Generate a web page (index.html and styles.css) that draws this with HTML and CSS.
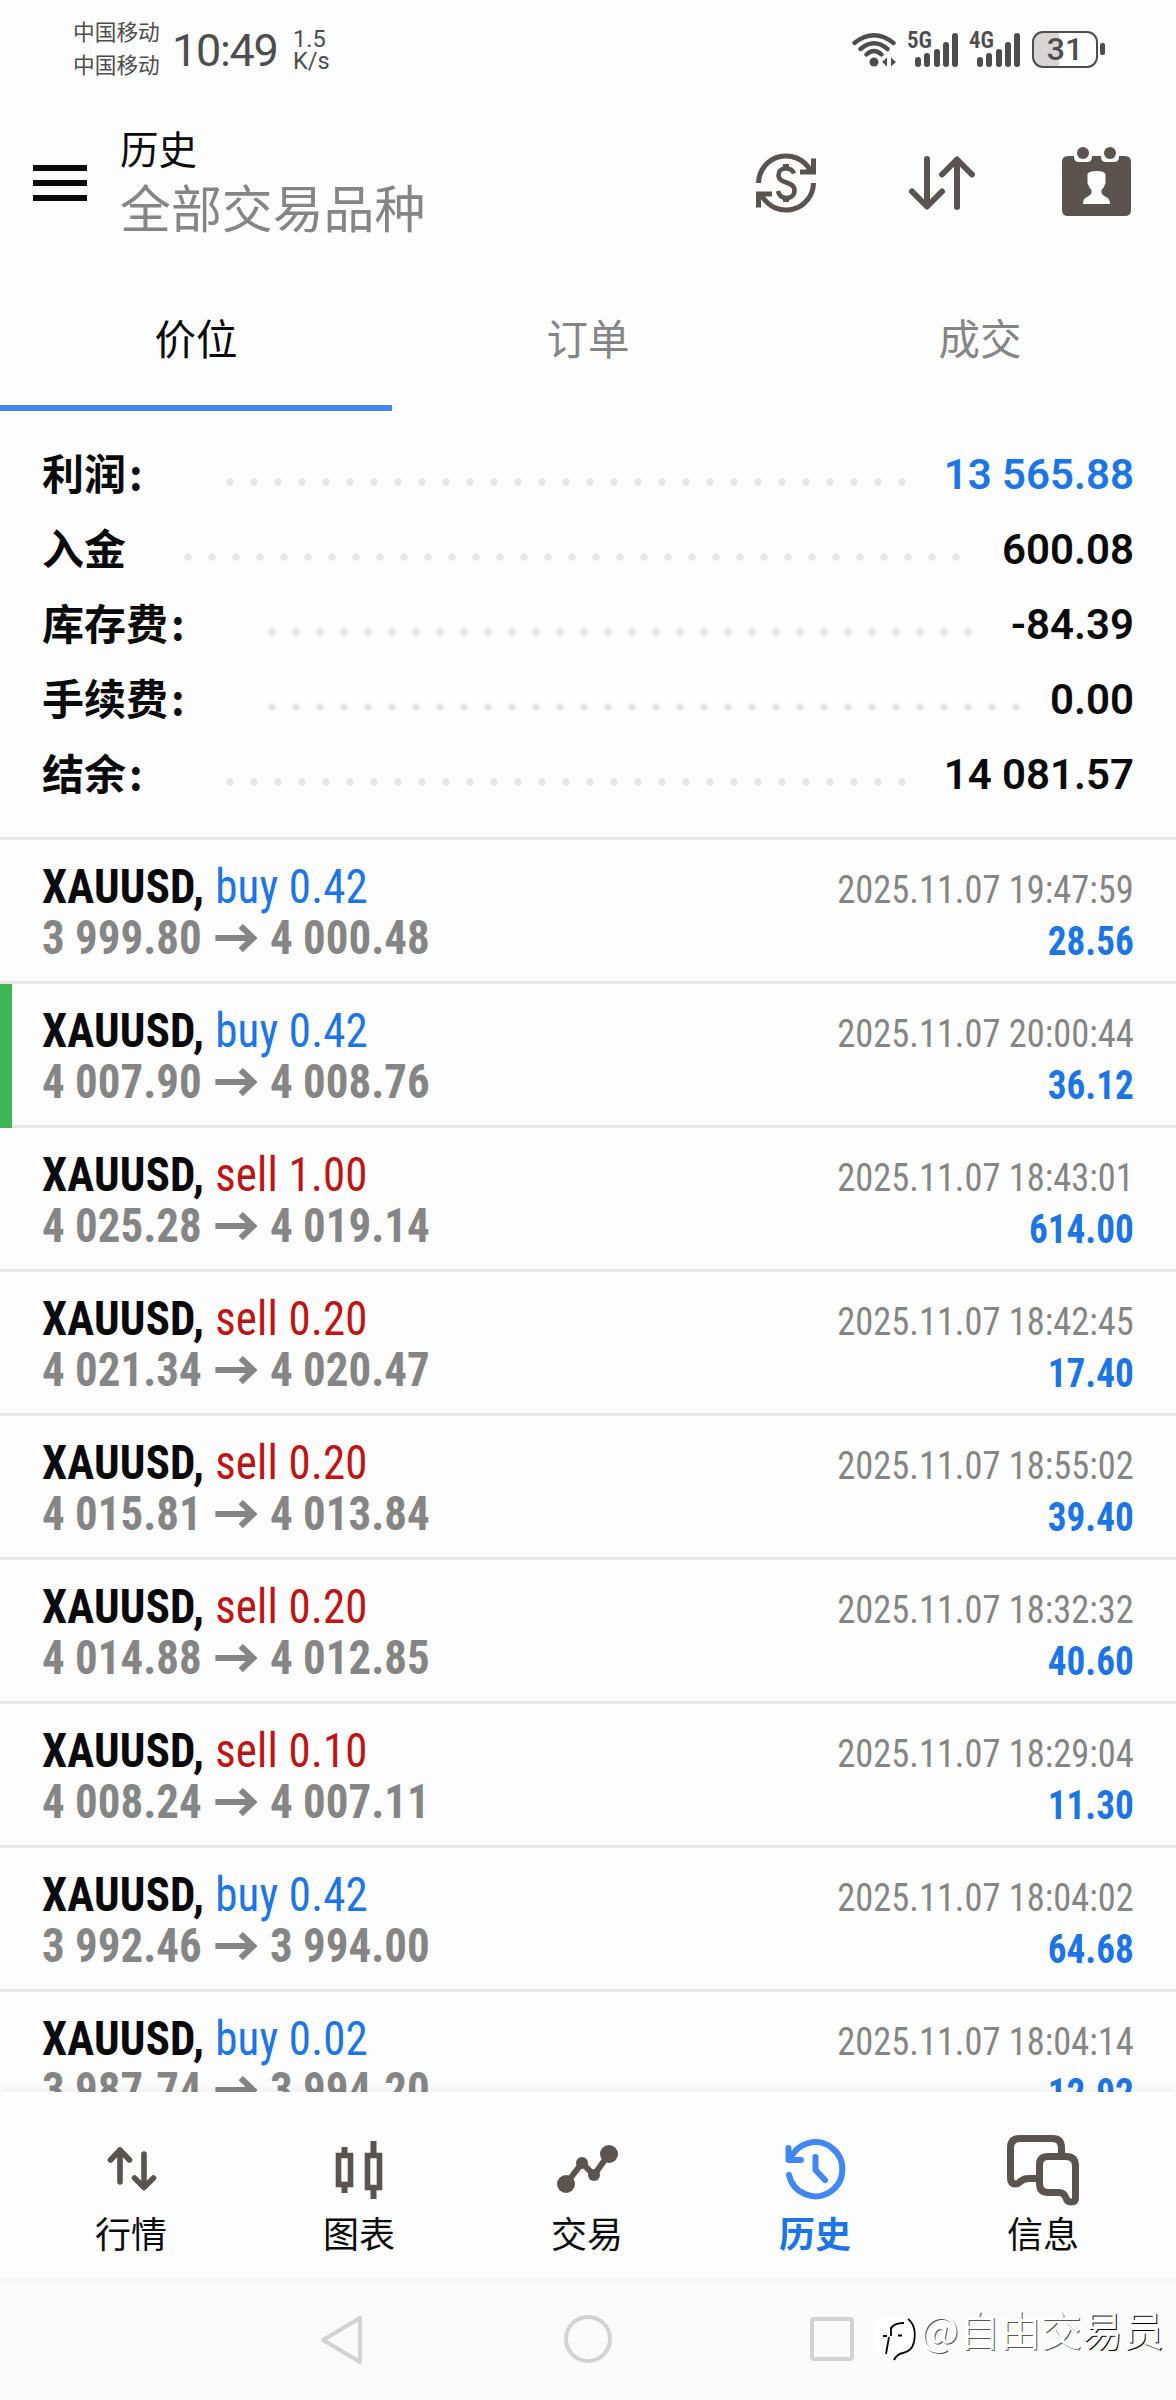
FILE: index.html
```html
<!DOCTYPE html>
<html lang="zh-CN">
<head>
<meta charset="utf-8">
<title>历史</title>
<link rel="stylesheet" href="styles.css">
</head>
<body>
<div class="status">
  <div class="carriers"><span>中国移动</span><span>中国移动</span></div>
  <div class="clock">10:49</div>
  <div class="speed"><span>1.5</span><span>K/s</span></div>
  <svg class="wifi" width="46" height="38" viewBox="850 31 46 38">
    <g fill="none" stroke="#4d4d4d" stroke-width="4.4" stroke-linecap="round">
      <path d="M854.500 43Q874 27.500 893.500 43M860.500 49Q874 37.500 887.500 49M866.500 54.500Q874 47.500 881.500 54.500"/>
    </g>
    <circle cx="874" cy="62" r="4.500" fill="#4d4d4d"/>
    <path d="M882 62l5-4.500v9zM891 57.500l5 4.500-5 4.500z" fill="#4d4d4d"/>
  </svg>
  <div class="signal"><b>5G</b><i></i><i></i><i></i><i></i><i></i></div>
  <div class="signal"><b>4G</b><i></i><i></i><i></i><i></i><i></i></div>
  <div class="battery">31</div>
  <div class="battery-tip"></div>
</div>

<header class="header">
  <div class="menu"><i></i><i></i><i></i></div>
  <div class="titles"><h1>历史</h1><p>全部交易品种</p></div>
  <svg class="currency" width="60" height="60" viewBox="0 0 60 60">
    <g fill="none" stroke="#5b534f" stroke-width="5">
      <path d="M2.500 30A27.500 27.500 0 0 1 54 17M57.500 30A27.500 27.500 0 0 1 6 43"/>
      <path d="M57.500 5.500V19H44M2.500 54.500V41H16"/>
      <path d="M38 20.500C36.500 16.500 33.500 15.500 30 15.500C25.500 15.500 22.500 18 22.500 22C22.500 31.500 38.500 27.500 38.500 37.500C38.500 42 35 45 30.500 45C26 45 23 42.500 22 38" stroke-width="4.600"/>
    </g>
    <path d="M27 11h6v5h-6zM27 44h6v5h-6zM51 13l6 6h-6zM9 47l-6-6h6z" fill="#5b534f"/>
  </svg>
  <svg class="sort" width="66" height="54" viewBox="0 0 66 54">
    <path d="M18 3V50M3 35.500L18 50.500L33 35.500M48 51V4M33 18.500L48 3.500L63 18.500" fill="none" stroke="#5b534f" stroke-width="6" stroke-linecap="round" stroke-linejoin="round"/>
  </svg>
  <svg class="calendar" width="69" height="69" viewBox="0 0 69 69">
    <path d="M6 9H12V10Q12 15 17 15H25Q30 15 30 10V9H39V10Q39 15 44 15H52Q57 15 57 10V9H63Q69 9 69 15V63Q69 69 63 69H6Q0 69 0 63V15Q0 9 6 9Z" fill="#5b534f"/>
    <circle cx="21" cy="6" r="6" fill="#5b534f"/><circle cx="48" cy="6" r="6" fill="#5b534f"/>
    <path d="M25.500 27Q27 24 34.500 24Q42 24 43.500 27V36Q42.500 40 39.500 43V46Q40 48 44 50Q48 51.500 48 57H21Q21 51.500 25 50Q29 48 29.500 46V43Q26.500 40 25.500 36Z" fill="#fdfdfd"/>
  </svg>
</header>

<nav class="tabs"><span class="active">价位</span><span>订单</span><span>成交</span></nav>

<section class="summary">
  <div><b class="w2">利润<u>:</u></b><i class="d28"></i><strong class="blue">13 565.88</strong></div>
  <div><b class="w1">入金</b><i class="d32"></i><strong>600.08</strong></div>
  <div><b class="w3">库存费<u>:</u></b><i class="d29"></i><strong>-84.39</strong></div>
  <div><b class="w3">手续费<u>:</u></b><i class="d31"></i><strong>0.00</strong></div>
  <div><b class="w2">结余<u>:</u></b><i class="d28"></i><strong>14 081.57</strong></div>
</section>

<svg width="0" height="0" class="defs"><symbol id="arrow" viewBox="0 0 42 28" preserveAspectRatio="none"><path d="M0 14H38M25.500 2L38 14L25.500 26" fill="none" stroke="#858585" stroke-width="6"/></symbol></svg>

<main class="deals">
  <article><div class="left"><p><b>XAUUSD,</b><span class="buy">buy 0.42</span></p><p class="price">3 999.80<svg><use href="#arrow"/></svg>4 000.48</p></div><div class="right"><time>2025.11.07 19:47:59</time><strong>28.56</strong></div></article>
  <article class="marked"><div class="left"><p><b>XAUUSD,</b><span class="buy">buy 0.42</span></p><p class="price">4 007.90<svg><use href="#arrow"/></svg>4 008.76</p></div><div class="right"><time>2025.11.07 20:00:44</time><strong>36.12</strong></div></article>
  <article><div class="left"><p><b>XAUUSD,</b><span class="sell">sell 1.00</span></p><p class="price">4 025.28<svg><use href="#arrow"/></svg>4 019.14</p></div><div class="right"><time>2025.11.07 18:43:01</time><strong>614.00</strong></div></article>
  <article><div class="left"><p><b>XAUUSD,</b><span class="sell">sell 0.20</span></p><p class="price">4 021.34<svg><use href="#arrow"/></svg>4 020.47</p></div><div class="right"><time>2025.11.07 18:42:45</time><strong>17.40</strong></div></article>
  <article><div class="left"><p><b>XAUUSD,</b><span class="sell">sell 0.20</span></p><p class="price">4 015.81<svg><use href="#arrow"/></svg>4 013.84</p></div><div class="right"><time>2025.11.07 18:55:02</time><strong>39.40</strong></div></article>
  <article><div class="left"><p><b>XAUUSD,</b><span class="sell">sell 0.20</span></p><p class="price">4 014.88<svg><use href="#arrow"/></svg>4 012.85</p></div><div class="right"><time>2025.11.07 18:32:32</time><strong>40.60</strong></div></article>
  <article><div class="left"><p><b>XAUUSD,</b><span class="sell">sell 0.10</span></p><p class="price">4 008.24<svg><use href="#arrow"/></svg>4 007.11</p></div><div class="right"><time>2025.11.07 18:29:04</time><strong>11.30</strong></div></article>
  <article><div class="left"><p><b>XAUUSD,</b><span class="buy">buy 0.42</span></p><p class="price">3 992.46<svg><use href="#arrow"/></svg>3 994.00</p></div><div class="right"><time>2025.11.07 18:04:02</time><strong>64.68</strong></div></article>
  <article><div class="left"><p><b>XAUUSD,</b><span class="buy">buy 0.02</span></p><p class="price">3 987.74<svg><use href="#arrow"/></svg>3 994.20</p></div><div class="right"><time>2025.11.07 18:04:14</time><strong>12.92</strong></div></article>
</main>

<nav class="bottom">
  <div><svg viewBox="0 0 72 72"><path d="M25 47V16M15.500 25L25 15L34.500 25M49 19V50M39.500 43L49 52.500L58.500 43" fill="none" stroke="#5b534f" stroke-width="5.600" stroke-linecap="round" stroke-linejoin="round"/></svg><span>行情</span></div>
  <div><svg viewBox="0 0 72 72"><path d="M21.500 12V18M21.500 52V58M50.500 6V18M50.500 54V64" stroke="#5b534f" stroke-width="6"/><path d="M15.500 20.500H27.500V49.500H15.500ZM44.500 20.500H56.500V52.500H44.500Z" fill="none" stroke="#5b534f" stroke-width="5.600"/></svg><span>图表</span></div>
  <div><svg viewBox="0 0 72 72"><path d="M15 49L31 28L43 40L58 19" fill="none" stroke="#5b534f" stroke-width="6"/><g fill="#5b534f"><circle cx="15" cy="49" r="9"/><circle cx="31" cy="28" r="6"/><circle cx="43" cy="40" r="6"/><circle cx="58" cy="19" r="9"/></g></svg><span>交易</span></div>
  <div class="on"><svg viewBox="0 0 72 72"><path d="M10 40A27 27 0 1 0 11 25M9.500 13V25H22M36.500 22V35L46 45" fill="none" stroke="#4286f4" stroke-width="6" stroke-linecap="round" stroke-linejoin="round"/></svg><span>历史</span></div>
  <div><svg viewBox="0 0 72 72"><path d="M54.500 21V13Q54.500 3.500 45.500 3.500H13Q3.500 3.500 3.500 13V43Q3.500 49 8.500 49Q10.500 49 14 46Q17 43.500 22 43.500H32M41 21.500H59Q68.500 21.500 68.500 31V63Q68.500 67 64 67Q60 67 59 63Q57 57.500 52 57.500H41.500Q32.500 57.500 32.500 48.500V30Q32.500 21.500 41 21.500Z" fill="none" stroke="#5b534f" stroke-width="7"/></svg><span>信息</span></div>
</nav>

<footer class="system">
  <svg width="44" height="50" viewBox="0 0 44 50"><path d="M40 3V47L3 25Z" fill="none" stroke="#d2d2d2" stroke-width="4.200" stroke-linejoin="round"/></svg>
  <i class="home"></i>
  <i class="recent"></i>
  <div class="watermark">
    <svg width="44" height="50" viewBox="0 0 44 50">
      <rect x="0" y="1" width="40" height="39" rx="13" fill="#fff"/>
      <path d="M9 21H13M17 21V12M12 39L15 22M17 14Q19 8 30 8M24 20.500H28M34 4Q43 11 40 27Q38 36 29 38Q23 39 20 45" fill="none" stroke="#000" stroke-width="1.800"/>
    </svg>
    <span>@自由交<b>易员</b></span>
  </div>
</footer>
</body>
</html>
```
FILE: styles.css
```css
* { box-sizing: border-box; margin: 0; padding: 0; }
body {
  width: 1176px; height: 2400px; overflow: hidden;
  display: flex; flex-direction: column;
  background: #fdfdfd; color: #0a0a0a;
  font-family: Roboto, "Noto Sans CJK SC", sans-serif;
}
i { display: block; }
svg { display: block; flex: none; }
.defs { height: 0; }

.status { height: 100px; display: flex; align-items: flex-start; padding-left: 73px; color: #4d4d4d; flex: none; }
.carriers { width: 99px; padding-top: 14px; font: 21.700px/33px "Noto Sans CJK SC", sans-serif; display: flex; flex-direction: column; }
.clock { width: 119px; padding-top: 21px; font-size: 45px; line-height: 60px; letter-spacing: -1.300px; }
.speed { width: 558px; padding-top: 29px; font-size: 23.500px; line-height: 21.500px; display: flex; flex-direction: column; padding-left: 2px; }
.wifi { margin-top: 31px; margin-left: 1px; }
.signal { display: flex; width: 50px; height: 34px; margin: 33px 0 0 12px; align-items: flex-end; gap: 3.300px; padding-left: 7px; position: relative; }
.signal i { width: 6px; border-radius: 3px; background: #4d4d4d; height: 10px; }
.signal i:nth-of-type(2) { height: 14px; }
.signal i:nth-of-type(3) { height: 18px; }
.signal i:nth-of-type(4) { height: 25px; }
.signal i:nth-of-type(5) { height: 34px; }
.signal b { position: absolute; left: -1px; top: -3px; font: 600 23px/22px "Roboto Condensed", sans-serif; }
.battery { width: 66px; height: 37px; margin: 31px 2px 0 12px; border: 2.500px solid #4d4d4d; border-radius: 11px; background: linear-gradient(90deg, #d5d5d5 25px, transparent 25px); font-size: 32px; line-height: 33px; font-weight: 500; text-align: center; }
.battery-tip { width: 5px; height: 12px; border-radius: 2px; background: #4d4d4d; margin-top: 43px; }

.header { height: 160px; flex: none; display: flex; align-items: flex-start; padding: 0 45px 0 33px; }
.menu { width: 54px; margin-top: 65px; display: flex; flex-direction: column; gap: 9px; }
.menu i { height: 6px; background: #0a0a0a; }
.titles { margin-left: 33px; width: 636px; padding-top: 22px; font-family: "Noto Sans CJK SC", sans-serif; }
.titles h1 { font-size: 38.500px; line-height: 50px; font-weight: 400; }
.titles p { font-size: 50.900px; line-height: 69px; color: #858585; }
.currency { margin-top: 53px; }
.sort { margin: 56px 0 0 93px; }
.calendar { margin: 47px 0 0 87px; }

.tabs { height: 151px; flex: none; display: grid; grid-template-columns: repeat(3, 392px); text-align: center; font: 41.500px/154px "Noto Sans CJK SC", sans-serif; color: #858585; }
.tabs span { height: 151px; border-bottom: 6px solid transparent; }
.tabs .active { color: #0a0a0a; border-color: #4286f4; }

.summary { height: 426px; flex: none; padding: 26px 42px 0 42px; }
.summary div { height: 75px; display: flex; align-items: center; }
.summary b { font: 700 42px/69px "Noto Sans CJK SC", sans-serif; height: 75px; }
.summary u { text-decoration: none; margin-left: 3px; }
.summary i { height: 8px; margin-top: 14px; background: radial-gradient(circle at 4px 4px, #e6e6e6 3.300px, transparent 4.200px) 0 0 / 24px 8px repeat-x; }
.w1 { width: 142px; }
.w2 { width: 184px; }
.w3 { width: 226px; }
.d28 { width: 680px; }
.d29 { width: 704px; }
.d31 { width: 752px; }
.d32 { width: 776px; }
.summary strong { margin-left: auto; font-weight: 600; font-size: 42px; line-height: 75px; }
.summary .blue { color: #1b75e6; }

.deals { height: 1255px; overflow: hidden; flex: none; font: 48px/51px "Roboto Condensed", sans-serif; }
.deals article { height: 144px; border-top: 3px solid #e5e5e5; display: flex; justify-content: space-between; padding: 0 42px; position: relative; }
.marked::before { content: ""; position: absolute; left: 0; top: 0; width: 12px; height: 144px; background: #3fb556; z-index: 1; }
.left { padding-top: 21px; transform: scaleX(.936); transform-origin: left; }
.left p { display: flex; align-items: center; height: 51px; white-space: pre; }
.left b { width: 185px; letter-spacing: .2px; }
.left span { letter-spacing: .2px; }
.buy, .right strong { color: #1b75e6; }
.sell { color: #c01414; }
.left .price { color: #858585; font-weight: 700; }
.price svg { width: 45px; height: 28px; margin: 0 14px; }
.right { padding-top: 25px; font-size: 39.200px; text-align: right; display: flex; flex-direction: column; transform: scaleX(.93); transform-origin: right; }
.right time { color: #858585; }
.right strong { font-size: 40px; }

.bottom { height: 186px; flex: none; position: relative; display: grid; grid-template-columns: repeat(5, 228px); padding: 43px 0 0 17px; background: #fdfdfd; box-shadow: 0 -2px 10px rgba(0,0,0,.07); }
.bottom div { display: flex; flex-direction: column; align-items: center; font: 36px/52px "Noto Sans CJK SC", sans-serif; }
.bottom svg { width: 72px; height: 72px; }
.bottom span { margin-top: -1px; }
.bottom .on { color: #1b75e6; font-weight: 700; }

.system { flex: 1; background: #fafafa; display: flex; align-items: flex-start; padding: 37px 0 0 320px; }
.system > svg { margin-right: 200px; }
.home { width: 48px; height: 48px; border: 4px solid #d2d2d2; border-radius: 50%; }
.recent { width: 44px; height: 44px; border: 4px solid #d2d2d2; border-radius: 4px; margin: 2px 0 0 198px; }
.watermark { display: flex; margin: 0 0 0 20px; white-space: nowrap; }
.watermark span { margin: -8px 0 0 2px; font: 400 41px/42px "Noto Sans CJK SC", sans-serif; color: #fff; text-shadow: 1px 1px 0 #555; }
.watermark b { font-weight: 400; text-shadow: 1px 1px 0 #000; }
```
